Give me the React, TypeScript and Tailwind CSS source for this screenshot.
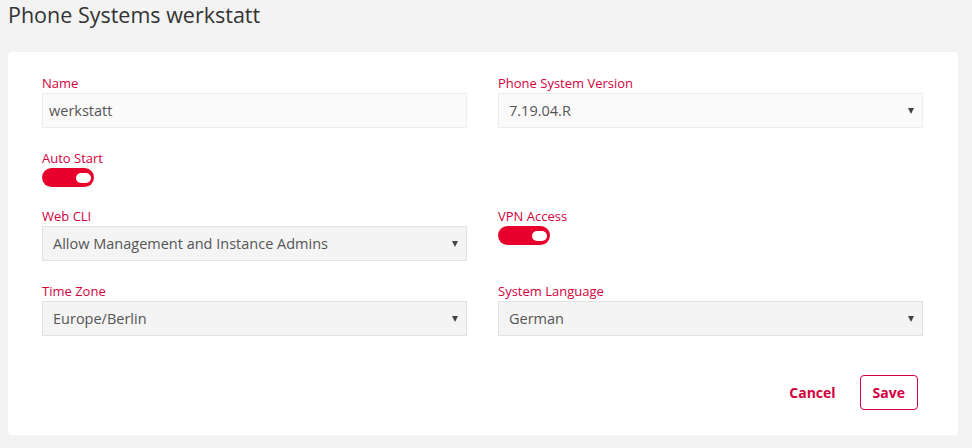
import { useState } from 'react'

const font = { fontFamily: '"Open Sans", "Noto Sans", sans-serif' }

function Label({ children }: { children: React.ReactNode }) {
  return <label className="block text-[13px] leading-[18px] text-[#d3003d] mb-px">{children}</label>
}

function Select({ value, light }: { value: string; light?: boolean }) {
  return (
    <div
      className={`flex items-center justify-between h-[35px] pl-[10px] pr-[8px] border text-[14.5px] text-[#555] ${
        light ? 'bg-[#fafafa] border-[#ededed]' : 'bg-[#f4f4f4] border-[#e2e2e2]'
      }`}
    >
      <span>{value}</span>
      <svg width="6" height="6" viewBox="0 0 6 6" className="mt-px">
        <path d="M0 0h6L3 6z" fill="#444" />
      </svg>
    </div>
  )
}

function Toggle({ on, onClick }: { on: boolean; onClick: () => void }) {
  return (
    <button
      onClick={onClick}
      className={`flex items-center w-[52px] h-[19px] rounded-full px-[3px] ${
        on ? 'bg-[#e8002c] justify-end' : 'bg-[#ccc] justify-start'
      }`}
    >
      <span className="block w-[15px] h-[10px] rounded-full bg-white" />
    </button>
  )
}

export default function App() {
  const [autoStart, setAutoStart] = useState(true)
  const [vpn, setVpn] = useState(true)

  return (
    <div className="min-h-[448px] bg-[#f3f3f3] pb-3" style={font}>
      <h1 className="pl-2 text-[21.5px] leading-[30px] text-[#333]">Phone Systems werkstatt</h1>

      <div className="mt-[22px] ml-2 mr-[14px] bg-white rounded-[4px] pt-[22px] pb-[25px] pl-[34px] pr-[35px]">
        <div className="grid grid-cols-2 gap-x-[31px] gap-y-[21px]">
          <div>
            <Label>Name</Label>
            <input
              defaultValue="werkstatt"
              className="block w-full h-[35px] px-[6px] bg-[#fafafa] border border-[#ededed] text-[14.5px] text-[#555] outline-none"
            />
          </div>
          <div>
            <Label>Phone System Version</Label>
            <Select value="7.19.04.R" light />
          </div>

          <div className="h-[37px]">
            <Label>Auto Start</Label>
            <Toggle on={autoStart} onClick={() => setAutoStart(!autoStart)} />
          </div>
          <div />

          <div>
            <Label>Web CLI</Label>
            <Select value="Allow Management and Instance Admins" />
          </div>
          <div>
            <Label>VPN Access</Label>
            <Toggle on={vpn} onClick={() => setVpn(!vpn)} />
          </div>

          <div>
            <Label>Time Zone</Label>
            <Select value="Europe/Berlin" />
          </div>
          <div>
            <Label>System Language</Label>
            <Select value="German" />
          </div>
        </div>

        <div className="flex justify-end items-center gap-[11px] mt-[39px] mr-[5px]">
          <button className="h-[35px] px-[13px] text-[14px] font-bold text-[#d3003d]">Cancel</button>
          <button className="h-[35px] px-[12px] rounded-[4px] border border-[#d3003d] text-[14px] font-bold text-[#d3003d]">
            Save
          </button>
        </div>
      </div>
    </div>
  )
}
